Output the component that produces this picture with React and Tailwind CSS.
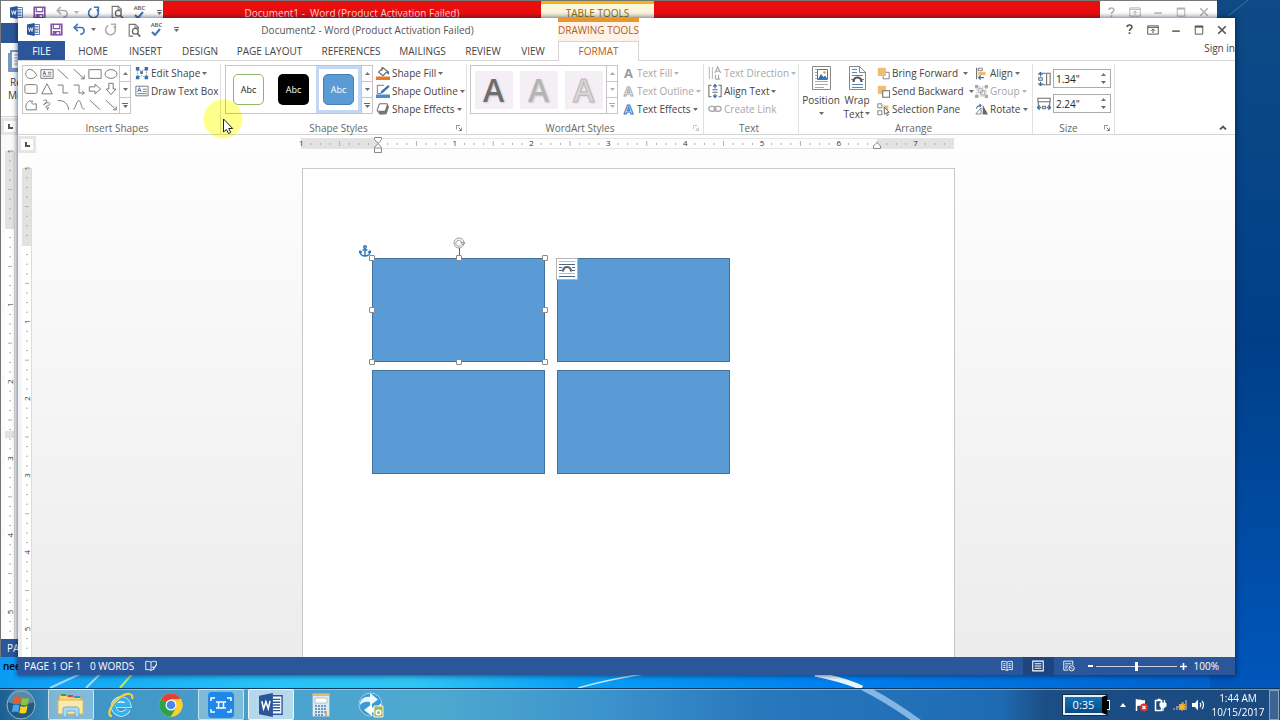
import React, { useState } from 'react';

const tabs = [
    { name: 'HOME', w: 'w-[52px]' },
    { name: 'INSERT', w: 'w-[53px]' },
    { name: 'DESIGN', w: 'w-[56px]' },
    { name: 'PAGE LAYOUT', w: 'w-[83px]' },
    { name: 'REFERENCES', w: 'w-[80px]' },
    { name: 'MAILINGS', w: 'w-[63px]' },
    { name: 'REVIEW', w: 'w-[58px]' },
    { name: 'VIEW', w: 'w-[42px]' },
];

/* ---------- small icons ---------- */

const Icon = ({ size = 14, children, className = '' }) => (
    <svg width={size} height={size} viewBox="0 0 16 16" fill="none" stroke="#6b6b6b" className={`shrink-0 ${className}`} aria-hidden="true">
        {children}
    </svg>
);

const Caret = ({ light }) => (
    <svg width="5" height="3" viewBox="0 0 5 3" className="shrink-0" aria-hidden="true">
        <path d="M0 0h5L2.500 3z" fill={light ? '#b5b5b5' : '#6a6a6a'} />
    </svg>
);

const WordLogo = ({ size = 13 }) => (
    <svg width={size} height={size} viewBox="0 0 26 26" className="shrink-0" aria-hidden="true">
        <path d="M14 3h11v20H14z" fill="#fff" stroke="#2b579a" strokeWidth="1.500" />
        <path d="M15 7h8M15 10h8M15 13h8M15 16h8M15 19h8" stroke="#2b579a" strokeWidth="1.400" />
        <path d="M0 3L15 0v26L0 23z" fill="#2b579a" />
        <path d="M3 9l2 8 2.500-7.500L10 17l2-8.500" fill="none" stroke="#fff" strokeWidth="1.700" />
    </svg>
);

const SaveIcon = () => (
    <Icon size={13}>
        <path d="M1.500 1.500h13v13h-13z" stroke="#8452a0" strokeWidth="2" />
        <path d="M4 2v5h8V2" stroke="#8452a0" strokeWidth="1.500" />
        <path d="M4 15v-4.500h8V15" stroke="#8452a0" strokeWidth="1.500" />
        <path d="M5 11h3v4H5z" fill="#8452a0" stroke="none" />
    </Icon>
);

const UndoIcon = ({ color }) => (
    <Icon size={13}>
        <path d="M2 5.500h8c5 0 5 8-1 8.500" stroke={color} strokeWidth="2" />
        <path d="M6 1L1.500 5.500 6 10" stroke={color} strokeWidth="2" />
    </Icon>
);

const RedoIcon = ({ color }) => (
    <Icon size={13}>
        <path d="M5.500 3A6 6 0 1 0 12 4" stroke={color} strokeWidth="2" />
        <path d="M8.500 1.500H14V7" stroke={color} strokeWidth="2" />
    </Icon>
);

const PreviewIcon = () => (
    <Icon size={14}>
        <path d="M7 15H2.500V1.500h7L13 5v2" stroke="#777" strokeWidth="1.300" />
        <path d="M9 1.500V5h4" stroke="#777" />
        <circle cx="9.500" cy="9.500" r="3.300" fill="#fff" stroke="#666" strokeWidth="1.500" />
        <path d="M12 12l3 3.500" stroke="#666" strokeWidth="2" />
    </Icon>
);

const SpellIcon = () => (
    <span className="flex flex-col items-center">
        <span className="text-[6px] leading-[5px] font-semibold text-[#555]">ABC</span>
        <svg width="10" height="8" viewBox="0 0 10 8" aria-hidden="true">
            <path d="M1 4l3 3 5-6" fill="none" stroke="#3a76b8" strokeWidth="2" />
        </svg>
    </span>
);

const QuickAccess = ({ active }) => (
    <div className="flex items-center pl-1 h-full shrink-0 w-[182px]">
        {[
            ['Word', <WordLogo />],
            ['Save', <SaveIcon />],
            ['Undo', <UndoIcon color={active ? '#3a76b8' : '#b0b0b0'} />],
        ].map(([name, icon]) => (
            <button key={name} aria-label={name} className="w-[23px] flex justify-center">{icon}</button>
        ))}
        <button aria-label="Undo list" className="w-2"><Caret light={!active} /></button>
        {[
            ['Redo', <RedoIcon color={active ? '#b0b0b0' : '#3a76b8'} />],
            ['Print preview', <PreviewIcon />],
            ['Spelling', <SpellIcon />],
        ].map(([name, icon]) => (
            <button key={name} aria-label={name} className="w-[23px] flex justify-center">{icon}</button>
        ))}
        <button aria-label="Customize toolbar" className="w-4 flex flex-col items-center gap-px">
            <span className="w-[5px] h-px bg-[#666]" />
            <Caret />
        </button>
    </div>
);

const WindowButtons = ({ color }) => (
    <div className="flex items-center h-full shrink-0 bg-white pr-[2px]">
        <button aria-label="Help" className="w-[23px] flex justify-center">
            <Icon size={11}>
                <path d="M4.500 4.500c0-4 7-4 7 0 0 2.500-3.500 2.500-3.500 5.500" stroke={color} strokeWidth="2.400" />
                <path d="M8 12v2.500" stroke={color} strokeWidth="2.600" />
            </Icon>
        </button>
        <button aria-label="Ribbon display options" className="w-[23px] flex justify-center">
            <Icon size={12}>
                <path d="M1 2.500h14v11H1zM1 4.500h14M8 12V7M5.500 9L8 6.500 10.500 9" stroke={color} strokeWidth="1.300" />
            </Icon>
        </button>
        <button aria-label="Minimize" className="w-[23px] flex justify-center">
            <Icon size={12}><path d="M3 9.500h10" stroke={color} strokeWidth="2" /></Icon>
        </button>
        <button aria-label="Maximize" className="w-[23px] flex justify-center">
            <Icon size={12}>
                <path d="M3 3h10v10.500H3z" stroke={color} strokeWidth="1.300" />
                <path d="M2.500 3.500h11" stroke={color} strokeWidth="2.600" />
            </Icon>
        </button>
        <button aria-label="Close" className="w-[23px] flex justify-center">
            <Icon size={12}><path d="M3 3l10 10M13 3L3 13" stroke={color} strokeWidth="2.200" /></Icon>
        </button>
    </div>
);

/* ---------- rulers ---------- */

const INCH = 76.8;

const HorizontalRuler = () => {
    const marks = [];
    for (let i = -7; i <= 59; i++) {
        if (i % 8 !== 0) marks.push(i);
    }
    return (
        <svg width="660" height="17" viewBox="-3 0 660 17" className="shrink-0" aria-hidden="true">
            <path d="M0 3h653v9H0z" fill="#fff" />
            <path d="M0 3h77v9H0zM576 3h77v9h-77z" fill="#e2e2e2" />
            <path d="M0 2.500h653M0 12.500h653" stroke="#e4e4e4" />
            {marks.map((i) => {
                const x = 77 + (i * INCH) / 8;
                return i % 4 === 0
                    ? <path key={i} d={`M${x} 5v5`} stroke="#b0b0b0" />
                    : <path key={i} d={`M${x} 7v2`} stroke="#b0b0b0" />;
            })}
            {[-1, 1, 2, 3, 4, 5, 6, 7].map((n) => (
                <text key={n} x={77 + n * INCH} y="10" textAnchor="middle" fontSize="8" fill="#333">{Math.abs(n)}</text>
            ))}
            <path d="M73.500 1.500h7v2L77 7.500l-3.500-4zM77 7.500l3.500 4v5h-7v-5zM73.500 12h7" fill="#fff" stroke="#8a8a8a" />
            <path d="M576 6.500l3.500 3.500v2.500h-7V10z" fill="#fff" stroke="#8a8a8a" />
        </svg>
    );
};

const VerticalRuler = ({ band }) => {
    const marks = [];
    for (let i = -7; i <= 43; i++) {
        if (i % 8 !== 0) marks.push(i);
    }
    return (
        <svg width="10" height="494" viewBox="0 -5 10 494" className="shrink-0" aria-hidden="true">
            <path d="M0 0h10v489H0z" fill="#fff" />
            <path d="M0 0h10v78H0z" fill="#e2e2e2" />
            {band && <path d="M0 280h10v7H0z" fill="#e2e2e2" />}
            <path d="M9.500 0v489" stroke="#dcdcdc" />
            {marks.map((i) => {
                const y = 77 + (i * INCH) / 8;
                return i % 4 === 0
                    ? <path key={i} d={`M3 ${y}h4`} stroke="#b0b0b0" />
                    : <path key={i} d={`M4 ${y}h2`} stroke="#b0b0b0" />;
            })}
            {[-1, 1, 2, 3, 4, 5].map((n) => (
                <text key={n} transform={`translate(8 ${77 + n * INCH}) rotate(-90)`} textAnchor="middle" fontSize="8" fill="#333">{Math.abs(n)}</text>
            ))}
        </svg>
    );
};

const TabSelector = () => (
    <button aria-label="Tab selector" className="w-[18px] h-[17px] shrink-0 bg-[#e6e6e6] p-[3px]">
        <span className="flex items-center justify-center bg-white h-[11px]">
            <svg width="5" height="5" viewBox="0 0 5 5"><path d="M1 0v4h4" fill="none" stroke="#555" strokeWidth="2" /></svg>
        </span>
    </button>
);

/* ---------- ribbon ---------- */

const Group = ({ name, width, children, launcher, faded }) => (
    <section className={`flex flex-col shrink-0 border-r border-[#e1e1e1] mt-[3px] ${width}`}>
        <div className="flex h-[58px] px-1">{children}</div>
        <div className="flex items-center h-3 pr-1">
            <h2 className="flex-1 text-center leading-3 text-[#666]">{name}</h2>
            {launcher && (
                <button aria-label={`${name} options`}>
                    <svg width="6" height="6" viewBox="0 0 7 7" fill="none" stroke={faded ? '#bbb' : '#777'}>
                        <path d="M.5 5V.5H5M3 3l3 3M6.500 3v3.500H3" />
                    </svg>
                </button>
            )}
        </div>
    </section>
);

const Tool = ({ icon, label, caret, disabled, wide }) => (
    <button disabled={disabled} className={`flex items-center h-[18px] gap-[2px] whitespace-nowrap ${disabled ? 'text-[#a6a6a6]' : 'text-[#444]'}`}>
        {icon}
        <span>{label}</span>
        {caret && <span className={wide ? 'ml-[3px]' : ''}><Caret light={disabled} /></span>}
    </button>
);

const GalleryScroll = ({ faded }) => (
    <div className="flex flex-col w-[11px] shrink-0 border-l border-[#c6c6c6] divide-y divide-[#c6c6c6]">
        <button aria-label="Row up" className="flex-1 flex items-center justify-center">
            <svg width="5" height="3" viewBox="0 0 5 3"><path d="M0 3h5L2.500 0z" fill={faded ? '#aaa' : '#777'} /></svg>
        </button>
        <button aria-label="Row down" className="flex-1 flex items-center justify-center"><Caret light={faded} /></button>
        <button aria-label="More" className="flex-1 flex flex-col gap-px items-center justify-center">
            <span className={faded ? 'w-[6px] h-px bg-[#aaa]' : 'w-[6px] h-px bg-[#666]'} />
            <Caret light={faded} />
        </button>
    </div>
);

const shapes = [
    ['Teardrop', <path d="M6 2.500C2 4 1 8 3 11s8 3.500 11.500-1.500C13 6 10 3 6 2.500z" />],
    ['Text box', <><path d="M1 3h14v10H1zM9 6h4M9 8h4M3 10.500h10" /><path d="M3.500 9L5 4.500 6.500 9M4 7.500h2" stroke="#3a6fb0" /></>],
    ['Line', <path d="M2 2.500l12 11" />],
    ['Arrow', <path d="M2 2.500l12 11M14 9.500v4h-4" />],
    ['Rectangle', <path d="M1 3h14v10H1z" />],
    ['Oval', <ellipse cx="8" cy="8" rx="6.800" ry="5" />],
    ['Rounded rectangle', <rect x="1" y="3" width="14" height="10" rx="2" />],
    ['Triangle', <path d="M8 2l6 11.500H2z" />],
    ['Elbow connector', <path d="M2 3.500h6v9h6" />],
    ['Elbow arrow', <path d="M2 3.500h6v9h6M11.500 10l2.500 2.500-2.500 2.500" />],
    ['Right arrow', <path d="M1.500 5.500H8V2.500L14.500 8 8 13.500v-3H1.500z" />],
    ['Down arrow', <path d="M5.500 1.500V8H2.500L8 14.500 13.500 8h-3V1.500z" />],
    ['Freeform', <path d="M3 13.500c-2-4-.5-8 3-10h4C7 6 10 8 14 6.500v7z" />],
    ['Scribble', <path d="M4 3c5-2 5 1 1 4s4-4 6-1-7 3-4 5 4-3 1 3" />],
    ['Arc', <path d="M2 3c7-1 12 4 12.500 10.500" />],
    ['Curve', <path d="M1.500 12.500C4 14 5 2 8 3s2 10.500 6.500 9.500" />],
    ['Line 2', <path d="M2 2.500l12 11" />],
    ['Arrow 2', <path d="M2 2.500l12 11M14 9.500v4h-4" />],
];

const InsertShapes = () => (
    <Group name="Insert Shapes" width="w-[203px]">
        <div className="flex shrink-0 border border-[#c6c6c6] h-[49px] mt-px">
            <div className="grid grid-cols-[repeat(6,16px)]">
                {shapes.map(([name, drawing]) => (
                    <button key={name} aria-label={name} className="flex items-center justify-center">
                        <Icon size={14}>{drawing}</Icon>
                    </button>
                ))}
            </div>
            <GalleryScroll />
        </div>
        <div className="pl-1">
            <Tool
                label="Edit Shape"
                caret
                icon={
                    <Icon>
                        <path d="M3 3l4 3 6-3v10l-6-2-4 2z" stroke="#888" strokeDasharray="2 1" />
                        <path d="M1 1h4v4H1zM11 1h4v4h-4zM1 11h4v4H1zM11 11h4v4h-4zM6 6h3v3H6z" fill="#3a6fb0" stroke="none" />
                    </Icon>
                }
            />
            <Tool
                label="Draw Text Box"
                icon={
                    <Icon>
                        <path d="M1 2.500h14v11H1zM9 6h4.500M9 8.500h4.500M3 11h10.500" />
                        <path d="M3 9l2-5 2 5M3.500 7.500h3" stroke="#3a6fb0" />
                    </Icon>
                }
            />
        </div>
    </Group>
);

const styleItems = [
    { box: 'bg-white border border-[#8db56b] text-[#222]', frame: 'border-transparent' },
    { box: 'bg-black text-white', frame: 'border-transparent' },
    { box: 'bg-[#5b9bd5] border border-[#4a7fb3] text-white', frame: 'border-[#c5d8f3]' },
];

const ShapeStyles = () => (
    <Group name="Shape Styles" width="w-[246px]" launcher>
        <div className="flex shrink-0 border border-[#c6c6c6] h-[49px] mt-px">
            {styleItems.map((s, i) => (
                <button key={i} className={`w-[45px] border-[3px] flex items-center justify-center ${s.frame}`}>
                    <span className={`w-[31px] h-[31px] rounded-[5px] flex items-center justify-center text-[9px] ${s.box}`}>Abc</span>
                </button>
            ))}
            <GalleryScroll />
        </div>
        <div className="pl-[3px]">
            <Tool
                label="Shape Fill"
                caret
                icon={
                    <Icon>
                        <path d="M3 7l5-5 5 4-5 5zM7 1v4" strokeWidth="1.300" />
                        <path d="M13 5c3 1 2 4 1 5l-2-3z" fill="#3a6fb0" stroke="none" />
                        <path d="M0 12h16v4H0z" fill="#e8792b" stroke="none" />
                    </Icon>
                }
            />
            <Tool
                label="Shape Outline"
                caret
                icon={
                    <Icon>
                        <path d="M9 1.500H1.500V11H6" />
                        <path d="M5 11l1-3 8-7 1.500 2L8 10z" fill="#3a6fb0" stroke="none" />
                        <path d="M0 12h16v4H0z" fill="#4a8bcb" stroke="none" />
                    </Icon>
                }
            />
            <Tool
                label="Shape Effects"
                caret
                icon={
                    <Icon>
                        <path d="M2 12.500l3 2 7-.5 3-9-3-2.500z" fill="#777" stroke="none" />
                        <path d="M5 2h7c1 0 1.500.5 1 1.500l-2 6c-.3.700-1 1-1.500 1h-7c-1 0-1.500-.5-1-1.500l2-6C3.800 2.300 4.300 2 5 2z" fill="#fff" strokeWidth="1.200" />
                    </Icon>
                }
            />
        </div>
    </Group>
);

const LetterIcon = ({ className }) => (
    <span className={`w-[13px] shrink-0 text-center text-[13px] leading-[18px] font-bold ${className}`} aria-hidden="true">A</span>
);

const WordArtStyles = () => (
    <Group name="WordArt Styles" width="w-[237px]" launcher faded>
        <div className="flex shrink-0 border border-[#c6c6c6] h-[49px] mt-px -ml-px">
            {['text-[#6e6e6e]', 'text-[#b4b4b4]', 'text-[#d8d8d8] [-webkit-text-stroke:1px_#b8b8b8]'].map((c) => (
                <button key={c} className="w-[45px] flex items-center justify-center">
                    <span className={`w-[38px] h-[38px] bg-[#f4eff4] text-center text-[32px] leading-[38px] font-semibold [text-shadow:1px_1px_2px_#ccc] ${c}`}>A</span>
                </button>
            ))}
            <GalleryScroll faded />
        </div>
        <div className="pl-1">
            <Tool label="Text Fill" caret disabled icon={<LetterIcon className="text-[#9a9a9a]" />} />
            <Tool label="Text Outline" caret disabled icon={<LetterIcon className="text-white [-webkit-text-stroke:1px_#aaa]" />} />
            <Tool label="Text Effects" caret icon={<LetterIcon className="text-white [-webkit-text-stroke:1px_#3a76c0]" />} />
        </div>
    </Group>
);

const TextGroup = () => (
    <Group name="Text" width="w-[95px]">
        <div>
            <Tool
                label="Text Direction"
                caret
                disabled
                icon={
                    <Icon>
                        <path d="M1.500 1v14M5 1v14" stroke="#aaa" />
                        <path d="M8 8l3-7 3.500 7M9 6h4.500M8.500 10v5M12 10v5M8.500 15h5.500" stroke="#aaa" strokeWidth="1.300" />
                    </Icon>
                }
            />
            <Tool
                label="Align Text"
                caret
                icon={
                    <Icon>
                        <path d="M4 1.500H1v13h3M12 1.500h3v13h-3M5 6.500h6M5 9.500h6" strokeWidth="1.200" />
                        <path d="M8 0v5M6 3l2-2.500L10 3M8 16v-5M6 13l2 2.500L10 13" stroke="#3a6fb0" strokeWidth="1.400" />
                    </Icon>
                }
            />
            <Tool
                label="Create Link"
                disabled
                icon={
                    <Icon>
                        <rect x="1" y="5" width="8" height="5.500" rx="2.700" stroke="#aaa" strokeWidth="1.600" />
                        <rect x="7" y="5" width="8" height="5.500" rx="2.700" stroke="#aaa" strokeWidth="1.600" />
                    </Icon>
                }
            />
        </div>
    </Group>
);

const Arrange = () => (
    <Group name="Arrange" width="w-[234px]">
        <button className="w-9 shrink-0 flex flex-col items-center text-[#444] pt-[2px]">
            <svg width="19" height="24" viewBox="0 0 19 24" fill="none" stroke="#888">
                <path d="M.5.5h18v23H.5z" fill="#fff" />
                <path d="M3 3.500h2M3 6.500h2M3 9.500h2M3 12.500h2M3 15.500h13M3 18.500h13M3 21.500h9" stroke="#aaa" />
                <path d="M5.500 3.500h10v10h-10z" fill="#fff" stroke="#4a78b0" />
                <path d="M6 13l3-5 2.500 3 1.500-1.500 2.500 3.500z" fill="#3a6fb0" stroke="none" />
                <circle cx="12.500" cy="6.500" r="1.300" fill="#e0a030" stroke="none" />
            </svg>
            <span className="leading-[13px] mt-1">Position</span>
            <span className="h-[13px] flex items-center"><Caret /></span>
        </button>
        <button className="w-9 shrink-0 flex flex-col items-center text-[#444] pt-[2px]">
            <svg width="19" height="24" viewBox="0 0 19 24" fill="none" stroke="#888">
                <path d="M1.500.5h10l6 6v17h-16z" fill="#fff" />
                <path d="M11.500.5v6h6" />
                <path d="M4 3.500h5M4 6.500h5M4 9.500h11M3 13.500h2M14 13.500h2M4 18.500h11M4 21.500h11" stroke="#5a88bd" />
                <path d="M5.500 16c0-6 8-6 8 0" stroke="#555" strokeWidth="2.200" />
            </svg>
            <span className="leading-[13px] mt-1">Wrap</span>
            <span className="h-[13px] flex items-center gap-[2px]">Text <Caret /></span>
        </button>
        <div className="pl-[2px] w-[100px] shrink-0">
            <Tool
                label="Bring Forward"
                caret
                wide
                icon={
                    <Icon size={13}>
                        <path d="M9 6.500h6v8H7.500V11" />
                        <path d="M1 1h10v10H1z" fill="#eebd74" stroke="none" />
                    </Icon>
                }
            />
            <Tool
                label="Send Backward"
                caret
                wide
                icon={
                    <Icon size={13}>
                        <path d="M1 1h10v10H1z" fill="#eebd74" stroke="none" />
                        <path d="M7 7h8.500v8H7z" fill="#fff" strokeWidth="1.300" />
                    </Icon>
                }
            />
            <Tool
                label="Selection Pane"
                icon={
                    <Icon size={13}>
                        <path d="M1 1h5v5H1zM1 9.500h5v5H1z" />
                        <path d="M8 3h6v6H8z" fill="#eebd74" stroke="none" />
                        <path d="M9 5v9l2-2 1.500 3.500 1.500-1-1.500-3H15z" fill="#fff" stroke="#555" />
                    </Icon>
                }
            />
        </div>
        <div>
            <Tool
                label="Align"
                caret
                icon={
                    <Icon size={13}>
                        <path d="M2 1v14" strokeWidth="1.300" />
                        <path d="M4 1.500h5v3H4z" />
                        <path d="M4 6h9v4H4z" fill="#eebd74" stroke="none" />
                        <path d="M4 13h7M7 10.500L4.500 13 7 15.500" stroke="#3a6fb0" strokeWidth="1.500" />
                    </Icon>
                }
            />
            <Tool
                label="Group"
                caret
                disabled
                icon={
                    <Icon size={13}>
                        <path d="M2.500 2.500h11v11h-11z" stroke="#aaa" strokeDasharray="2 1" />
                        <path d="M4.500 4.500h5v5h-5zM7 7h5v5H7z" stroke="#999" />
                        <path d="M0 0h4v4H0zM12 0h4v4h-4zM0 12h4v4H0zM12 12h4v4h-4z" fill="#aaa" stroke="none" />
                    </Icon>
                }
            />
            <Tool
                label="Rotate"
                caret
                icon={
                    <Icon size={13}>
                        <path d="M1 13.500h6.500V6z" />
                        <path d="M9.500 2v12H16z" fill="#666" stroke="none" />
                        <path d="M2 7c0-3 2-4 5-4M5.500 1l2 2-2 2" stroke="#3a6fb0" strokeWidth="1.300" />
                    </Icon>
                }
            />
        </div>
    </Group>
);

const SizeField = ({ id, label, value, onChange, icon }) => (
    <div className="flex items-center gap-[2px]">
        <label htmlFor={id} aria-label={label}>{icon}</label>
        <div className="flex items-center border border-[#ababab] bg-white h-[19px] w-[58px] pl-[2px] pr-1">
            <input id={id} value={value} onChange={(e) => onChange(e.target.value)} className="flex-1 min-w-0 text-[#222] outline-none" />
            <div className="flex flex-col gap-[5px]">
                <button aria-label={`${label} up`} className="block">
                    <svg width="5" height="3" viewBox="0 0 5 3"><path d="M0 3h5L2.500 0z" fill="#777" /></svg>
                </button>
                <button aria-label={`${label} down`} className="block"><Caret /></button>
            </div>
        </div>
    </div>
);

const SizeGroup = () => {
    const [height, setHeight] = useState('1.34"');
    const [width, setWidth] = useState('2.24"');
    return (
        <Group name="Size" width="w-[82px]" launcher>
            <div className="flex flex-col gap-[6px] pt-[5px]">
                <SizeField
                    id="shape-height"
                    label="Shape height"
                    value={height}
                    onChange={setHeight}
                    icon={
                        <Icon>
                            <path d="M11 1.500h4v13h-4zM2 6.500h4v3H2zM6 1.500h4M6 14.500h4" strokeWidth="1.200" />
                            <path d="M4 0v5M1.500 3L4 .5 6.500 3M4 16v-5M1.500 13L4 15.500 6.500 13" stroke="#3a6fb0" strokeWidth="1.500" />
                        </Icon>
                    }
                />
                <SizeField
                    id="shape-width"
                    label="Shape width"
                    value={width}
                    onChange={setWidth}
                    icon={
                        <Icon>
                            <path d="M1 1.500h14v4H1zM6.500 10.500h3v3h-3zM1.500 6v4M14.500 6v4" strokeWidth="1.200" />
                            <path d="M0 12h5M3 9.500L.5 12 3 14.500M16 12h-5M13 9.500l2.500 2.500-2.500 2.500" stroke="#3a6fb0" strokeWidth="1.500" />
                        </Icon>
                    }
                />
            </div>
        </Group>
    );
};

/* ---------- document ---------- */

const handles = [
    '-left-1 -top-1',
    'left-1/2 -ml-[3px] -top-1',
    '-right-1 -top-1',
    '-left-1 top-1/2 -mt-[3px]',
    '-right-1 top-1/2 -mt-[3px]',
    '-left-1 -bottom-1',
    'left-1/2 -ml-[3px] -bottom-1',
    '-right-1 -bottom-1',
];

const box = 'relative w-[173px] h-[104px] bg-[#5b9bd5] border border-[#41719c]';

const Page = () => (
    <div className="w-[653px] border border-b-0 border-[#c8c8c8] bg-white pl-[69px] pt-[89px]">
        <div className="grid grid-cols-[173px_173px] gap-x-[12px] gap-y-2">
            <div className={box}>
                <svg width="14" height="20" viewBox="0 0 14 20" fill="none" stroke="#999" className="absolute left-1/2 -ml-[7px] -top-[22px]">
                    <circle cx="7" cy="6" r="5" />
                    <path d="M9.500 7.500A3 3 0 1 1 9.500 5M9 5.500h4L11 8z" />
                    <path d="M7.500 11v7" stroke="#666" />
                </svg>
                {handles.map((h) => (
                    <span key={h} className={`absolute w-[6px] h-[6px] bg-white border border-[#8a8a8a] rounded-[1px] ${h}`} />
                ))}
                <svg width="12" height="12" viewBox="0 0 12 12" fill="none" stroke="#2e75b6" strokeWidth="1.400" className="absolute -left-[14px] -top-[14px]">
                    <circle cx="6" cy="2" r="1.300" />
                    <path d="M6 3v8M3.500 5h5M1 6.500c0 6 10 6 10 0M0 8l1-2 2 1.500M12 8l-1-2-2 1.500" />
                </svg>
            </div>
            <div className={box}>
                <button aria-label="Layout options" className="absolute -left-[2px] -top-px w-[22px] h-[22px] bg-white border border-[#b5b5b5] flex items-center justify-center">
                    <svg width="16" height="16" viewBox="0 0 16 16" fill="none" stroke="#44688c">
                        <path d="M0 .5h16M0 12.500h16" stroke="#a9c3dd" />
                        <path d="M0 3.500h16M0 15.500h16" />
                        <path d="M0 6.500h3M13 6.500h3M0 9.500h3M13 9.500h3" />
                        <path d="M4 10.500c0-6 8-6 8 0" stroke="#666" strokeWidth="2.200" />
                    </svg>
                </button>
            </div>
            <div className={box} />
            <div className={box} />
        </div>
    </div>
);

const StatusBar = () => {
    const [zoom, setZoom] = useState(50);
    return (
        <footer className="flex items-center h-[18px] bg-[#2b579a] text-white pl-[6px] pr-4 shrink-0">
            <span className="w-[66px]">PAGE 1 OF 1</span>
            <span className="w-[55px]">0 WORDS</span>
            <button aria-label="Proofing">
                <Icon size={12}>
                    <path d="M8 3v11M8 3C6 1.500 3 1.500 1 2v11c2-.5 5-.5 7 1 1-1 2-1.300 4-1.500M8 3c2-1.500 4-1.500 7-1v3" stroke="#fff" strokeWidth="1.200" />
                    <path d="M10 9l2 2 4-6" stroke="#fff" strokeWidth="1.500" />
                </Icon>
            </button>
            <div className="flex items-center h-full ml-auto">
                <button aria-label="Read mode" className="w-[31px] flex justify-center">
                    <Icon size={12}>
                        <path d="M8 3v11M8 3C6 1.500 3 1.500 1 2v11c2-.5 5-.5 7 1 2-1.500 5-1.500 7-1V2c-2-.5-5-.5-7 1M3 5h3M3 7.500h3M3 10h3M10 5h3M10 7.500h3M10 10h3" stroke="#fff" strokeWidth="1.200" />
                    </Icon>
                </button>
                <button aria-label="Print layout" className="w-[31px] h-full flex items-center justify-center bg-[#1f4580]">
                    <Icon size={12}><path d="M1 1.500h14v13H1zM3.500 5h9M3.500 8h9M3.500 11h9" stroke="#fff" strokeWidth="1.400" /></Icon>
                </button>
                <button aria-label="Web layout" className="w-[31px] flex justify-center">
                    <Icon size={12}>
                        <path d="M7 13.500H1v-12h12v5M3 5h8M3 8h4M3 10.500h3" stroke="#fff" strokeWidth="1.200" />
                        <circle cx="11.500" cy="11" r="3.500" stroke="#fff" strokeWidth="1.200" />
                        <path d="M9 10l3 1 2 2" stroke="#fff" />
                    </Icon>
                </button>
                <button aria-label="Zoom out" className="w-[11px] flex justify-center"><span className="w-[5px] h-[2px] bg-white" /></button>
                <input
                    type="range"
                    aria-label="Zoom"
                    value={zoom}
                    onChange={(e) => setZoom(Number(e.target.value))}
                    className="appearance-none w-[81px] h-3 bg-transparent bg-[linear-gradient(#c8d4e6,#c8d4e6)] bg-[length:100%_1px] bg-center bg-no-repeat [&::-webkit-slider-thumb]:appearance-none [&::-webkit-slider-thumb]:w-[3px] [&::-webkit-slider-thumb]:h-[9px] [&::-webkit-slider-thumb]:bg-white"
                />
                <button aria-label="Zoom in" className="w-[13px] flex justify-center">
                    <svg width="7" height="7" viewBox="0 0 7 7"><path d="M0 3.500h7M3.500 0v7" stroke="#fff" strokeWidth="1.600" /></svg>
                </button>
                <span className="pl-1">100%</span>
            </div>
        </footer>
    );
};

const MainWindow = () => (
    <main className="absolute left-[18px] right-[45px] top-[18px] bottom-[13px] flex flex-col bg-white shadow-[0_0_5px_1px_rgba(0,20,60,0.6)]">
        <header className="flex h-[23px] shrink-0">
            <QuickAccess active />
            <h1 className="w-[335px] mr-[23px] text-center leading-[24px] text-[#555]">Document2 - Word (Product Activation Failed)</h1>
            <div className="w-[81px] border-t-4 border-[#e8962e] bg-[#fdf3e9] text-center leading-[17px] text-[#b85c14]">DRAWING TOOLS</div>
            <div className="ml-auto"><WindowButtons color="#555" /></div>
        </header>
        <nav className="flex h-5 shrink-0 border-b border-[#d5d5d5] text-[#444]">
            <button className="w-[47px] h-[19px] bg-[#2b579a] text-white mr-[2px]">FILE</button>
            {tabs.map((t) => (
                <button key={t.name} className={`whitespace-nowrap ${t.w}`}>{t.name}</button>
            ))}
            <button className="w-[81px] ml-1 h-5 bg-white border border-b-0 border-[#d5d5d5] text-[#b85c14] pb-[2px]">FORMAT</button>
            <a href="#signin" className="ml-auto leading-[14px]">Sign in</a>
        </nav>
        <div className="flex h-[74px] shrink-0 border-b border-[#d5d5d5]">
            <InsertShapes />
            <ShapeStyles />
            <WordArtStyles />
            <TextGroup />
            <Arrange />
            <SizeGroup />
            <button aria-label="Collapse ribbon" className="ml-auto mr-2 self-end mb-1">
                <svg width="8" height="5" viewBox="0 0 8 5"><path d="M1 4.500l3-3 3 3" fill="none" stroke="#555" strokeWidth="1.800" /></svg>
            </button>
        </div>
        <div className="flex-1 min-h-0 flex flex-col bg-linear-to-b from-[#fefefe] to-[#ececec]">
            <div className="flex h-7 shrink-0">
                <div className="w-[14px] shrink-0 pt-px"><TabSelector /></div>
                <div className="flex-1 flex justify-center pr-[11px] pt-px"><HorizontalRuler /></div>
            </div>
            <div className="flex-1 min-h-0 flex overflow-hidden">
                <div className="w-[14px] pl-1 shrink-0"><VerticalRuler /></div>
                <div className="flex-1 flex justify-center pr-[10px] pt-[5px]"><Page /></div>
            </div>
        </div>
        <StatusBar />
    </main>
);

const BackWindow = () => (
    <div className="absolute left-0 right-[63px] top-0 bottom-[31px] flex flex-col bg-white border-l border-t border-[#777] text-[#444]">
        <div className="flex h-[22px] shrink-0">
            <div className="w-[162px] overflow-hidden"><QuickAccess /></div>
            <div className="flex-1 flex bg-[#e90e0e]">
                <p className="w-[378px] text-center leading-[24px] text-[#ffd9d9] whitespace-pre">Document1 -  Word (Product Activation Failed)</p>
                <div className="w-[113px] border-t-[3px] border-[#f0b410] bg-[#fbf6dc] text-center leading-[19px] text-[#8a6d10]">TABLE TOOLS</div>
            </div>
            <WindowButtons color="#b5b5b5" />
        </div>
        <div className="w-[47px] h-5 bg-[#2b579a] shrink-0" />
        <div className="h-[74px] shrink-0 border-b border-[#d5d5d5] pl-[7px] pt-[7px]">
            <svg width="20" height="22" viewBox="0 0 20 22" fill="none" stroke="#4a78b0">
                <path d="M3 1h16v18H3z" fill="#fff" strokeWidth="1.500" />
                <path d="M1 3v18h16" strokeWidth="1.500" />
                <path d="M6 5h12M6 8h12M6 11h12M6 14h12" stroke="#aaa" />
            </svg>
            <p className="leading-[13px] pt-1 pl-[2px]">Read</p>
            <p className="leading-[13px]">Mode</p>
        </div>
        <div className="flex-1 min-h-0 overflow-hidden bg-[#fafafa]">
            <div className="h-[29px] pt-px"><TabSelector /></div>
            <div className="pl-1"><VerticalRuler band /></div>
        </div>
        <div className="h-[18px] bg-[#2b579a] text-white pl-[6px] leading-[18px] shrink-0">PAGE 1 OF 1</div>
    </div>
);

/* ---------- taskbar ---------- */

const taskbarApps = [
    {
        name: 'File Explorer',
        frame: 'border-white/60 bg-white/35',
        icon: (
            <svg width="28" height="26" viewBox="0 0 28 26">
                <path d="M2 3h7l2 2h13v17H2z" fill="#f2d680" stroke="#c9a548" />
                <path d="M4 2h5v2H4z" fill="#3d9b4a" />
                <path d="M11 3h5v2h-5z" fill="#d9432f" />
                <path d="M17 4h6v2h-6z" fill="#3a8fd0" />
                <path d="M1 8h25v14H1z" fill="#fbe9a8" stroke="#d8b860" />
                <path d="M6 25v-8c0-2 2-2 3-2h10c2 0 3 1 3 2v8h-4v-6h-8v6z" fill="#a9d8f2" stroke="#6ab0d8" />
            </svg>
        ),
    },
    {
        name: 'Internet Explorer',
        frame: 'border-transparent',
        icon: (
            <svg width="26" height="26" viewBox="0 0 26 26" fill="none">
                <path d="M20 17.500A7.500 7.500 0 1 1 20.500 13H8" stroke="#e8f8ff" strokeWidth="5.500" />
                <path d="M20 17.500A7.500 7.500 0 1 1 20.500 13H8" stroke="#35b2ee" strokeWidth="4" />
                <path d="M4 24C-2 24 3 12 11 6S26 1 24 7" stroke="#f5d23c" strokeWidth="2.200" />
            </svg>
        ),
    },
    {
        name: 'Chrome',
        frame: 'border-transparent',
        icon: (
            <svg width="24" height="24" viewBox="0 0 24 24">
                <circle cx="12" cy="12" r="11.500" fill="#fbcf2e" />
                <path d="M12 12L2.040 6.250A11.500 11.500 0 0 1 21.960 6.250H12z" fill="#e34133" />
                <path d="M12 12L2.040 6.250A11.500 11.500 0 0 0 12 23.500l5-8.500z" fill="#2ba24c" />
                <path d="M12 6.250h9.960A11.500 11.500 0 0 1 12 23.500l5-8.600z" fill="#fbcf2e" />
                <circle cx="12" cy="12" r="5.500" fill="#fff" />
                <circle cx="12" cy="12" r="4.300" fill="#4a85f0" />
            </svg>
        ),
    },
    {
        name: 'Screen recorder',
        frame: 'border-white/60 bg-white/30',
        icon: (
            <svg width="26" height="26" viewBox="0 0 26 26" fill="none" stroke="#fff" strokeWidth="1.500">
                <rect width="26" height="26" rx="4" fill="#1f87ea" stroke="none" />
                <path d="M3 9V6h4M19 6h4v3M3 17v3h4M19 20h4v-3M8 10h10M8 16h10M10.500 10v6M15.500 10v6" />
            </svg>
        ),
    },
    {
        name: 'Word',
        frame: 'border-white/80 bg-white/60',
        icon: <WordLogo size={24} />,
    },
    {
        name: 'Calculator',
        frame: 'border-transparent',
        icon: (
            <svg width="18" height="24" viewBox="0 0 18 24">
                <rect x=".5" y=".5" width="17" height="23" rx="1" fill="#dcebf7" stroke="#8fb4d2" />
                <path d="M1 1h16v2H1z" fill="#f0b860" />
                <path d="M3 5h12v5H3z" fill="#fff" stroke="#8aa" strokeWidth=".6" />
                <path d="M3 13h12M3 16h12M3 19h12M3 22h9" stroke="#6f97b8" strokeWidth="1.800" strokeDasharray="2 1" />
                <path d="M13 18h2v5h-2z" fill="#f0a040" />
            </svg>
        ),
    },
    {
        name: 'Sync',
        frame: 'border-transparent',
        icon: (
            <svg width="26" height="26" viewBox="0 0 26 26">
                <circle cx="12.500" cy="12.500" r="11.500" fill="#3b9bd8" stroke="#9fd0ee" />
                <path d="M2 13C2 7 7 4 12 5V1l8 6.500-8 6V10c-4-1-8 0-10 3z" fill="#eef8fd" />
                <path d="M23 11c1 6-4 10-9 9.500V24l-8-6 8-6v3.500c4 0 7-1.500 9-4.500z" fill="#fff" />
                <path d="M16 14h9v11h-9z" fill="#9fb85c" stroke="#eef3dc" />
                <circle cx="20.500" cy="20.500" r="2.300" fill="none" stroke="#fff" strokeWidth="1.500" />
            </svg>
        ),
    },
];

const Taskbar = () => (
    <div className="relative h-8 shrink-0 flex items-stretch border-t border-[#0d3a63] bg-[linear-gradient(90deg,#1c5f92_0px,#3e93c4_60px,#4aa3cc_300px,#4fa9cf_430px,#3d93cc_600px,#2878bd_760px,#1e6bb3_1000px,#1b4e85_1045px,#1a4a80_100%)] shadow-[inset_0_1px_0_rgba(255,255,255,0.4)] text-white">
        <svg width="360" height="31" viewBox="570 0 360 31" className="absolute left-[570px] top-0" fill="none" aria-hidden="true">
            <path d="M862 -2Q890 12 920 34" stroke="#9cc8ee" strokeWidth="6" opacity=".8" />
        </svg>
        <button aria-label="Start" className="w-[42px] mr-1 flex items-center justify-center">
            <svg width="30" height="30" viewBox="0 0 30 30">
                <circle cx="15" cy="15" r="14" fill="#235a80" stroke="#8fb9d0" />
                <path d="M2 12a13 13 0 0 1 26 0c-6 3-20 3-26 0z" fill="#7fa9c2" opacity=".6" />
                <path d="M8.500 7.500c2.500-1.500 4.500-1 6.500 0l-1.200 7c-2-1-4-1.500-6.500 0z" fill="#ee5a24" />
                <path d="M16 8c2.500 1 4.500 1 7-.5l-1.200 7c-2.500 1.500-4.500 1-7 .5z" fill="#8cc63f" />
                <path d="M7 15.500c2.500-1.500 4.500-1 6.500 0l-1.200 7c-2-1-4-1.500-6.500 0z" fill="#3fa9f5" />
                <path d="M14.500 16c2.500 1 4.500 1 7-.5l-1.200 7c-2.500 1.500-4.500 1-7 .5z" fill="#fcd116" />
            </svg>
        </button>
        {taskbarApps.map((app) => (
            <button key={app.name} aria-label={app.name} className={`w-[46px] mx-[2px] rounded-[2px] border flex items-center justify-center ${app.frame}`}>
                {app.icon}
            </button>
        ))}
        <div className="ml-auto flex items-center">
            <div className="flex items-center mr-1">
                <div className="w-[44px] h-[20px] border-2 border-[#e8eef4] bg-linear-to-b from-[#1274b8] to-[#064a86] border-r-[5px] border-r-black text-center text-[11px] leading-4 outline outline-1 outline-black/40">0:35</div>
                <span className="w-[3px] h-[10px] border border-l-0 border-[#e8eef4] bg-black" />
            </div>
            <button aria-label="Show hidden icons" className="w-[18px] flex justify-center">
                <svg width="6" height="4" viewBox="0 0 6 4"><path d="M0 4h6L3 0z" fill="#fff" /></svg>
            </button>
            <button aria-label="Action center" className="w-[19px] flex justify-center">
                <svg width="13" height="14" viewBox="0 0 13 14">
                    <path d="M1.500 1v12" stroke="#fff" strokeWidth="1.500" />
                    <path d="M2 2c3-1.500 4 1 8 0v6c-4 1-5-1-8 0z" fill="#fff" />
                    <circle cx="9" cy="9.500" r="4" fill="#d8342c" />
                    <path d="M7.500 8l3 3M10.500 8l-3 3" stroke="#fff" strokeWidth="1.200" />
                </svg>
            </button>
            <button aria-label="Power" className="w-[19px] flex justify-center">
                <svg width="13" height="14" viewBox="0 0 13 14" fill="none" stroke="#fff">
                    <path d="M3.500 1.500h3M1.500 2.500h6v10h-6z" strokeWidth="1.500" />
                    <path d="M6 5h6v3.500L9 10l-3-1.500z" fill="#fff" />
                    <path d="M7.500 2v3M10.500 2v3M9 10v3" strokeWidth="1.300" />
                </svg>
            </button>
            <button aria-label="Network" className="w-[19px] flex justify-center">
                <svg width="14" height="12" viewBox="0 0 14 12">
                    <path d="M0 11h2V9H0zM3 11h2V7H3zM6 11h2V5H6zM9 11h2V3H9zM12 11h2V1h-2z" fill="#7a8a98" />
                    <circle cx="9" cy="8" r="3" fill="#f5a623" />
                    <path d="M9 3.500v9M4.500 8h9M6 5l6 6M12 5l-6 6" stroke="#f8b63a" />
                </svg>
            </button>
            <button aria-label="Volume" className="w-[18px] flex justify-center">
                <svg width="13" height="12" viewBox="0 0 13 12" fill="none" stroke="#fff">
                    <path d="M0 4h3l3-3.500v11L3 8H0z" fill="#fff" stroke="none" />
                    <path d="M8 4c1 1 1 3 0 4M10 2c2 2 2 6 0 8" strokeWidth="1.200" />
                </svg>
            </button>
            <div className="w-[62px] text-center leading-[14px]">
                <p>1:44 AM</p>
                <p>10/15/2017</p>
            </div>
            <button aria-label="Show desktop" className="w-[10px] h-[30px] mr-px border border-white/40 bg-white/15" />
        </div>
    </div>
);

const Pointer = () => (
    <svg width="40" height="40" viewBox="0 0 40 40" className="absolute left-[203px] top-[99px] pointer-events-none mix-blend-multiply" aria-hidden="true">
        <circle cx="20" cy="20" r="19.500" fill="#ffff8c" />
        <path d="M20.500 20v13l3-2.500 2 4 2.200-1-2-4h4z" fill="#fff" stroke="#222" />
    </svg>
);

const App = () => (
    <div className="relative h-screen overflow-hidden flex flex-col text-[10px] leading-none font-['Open_Sans','Noto_Sans',sans-serif]">
        <div className="relative flex-1 min-h-0 bg-[linear-gradient(90deg,#0a9cf5_0%,#25c2f8_20%,#2fc6f5_32%,#08a0f5_45%,#0080ee_65%,#005bc4_100%)]">
            <div className="absolute right-0 inset-y-0 w-[70px] bg-linear-to-b from-[#0f4a86] via-[#003f88] to-[#0056bb]" />
            <svg width="40" height="18" viewBox="0 0 40 18" className="absolute right-[20px] top-0" fill="none" aria-hidden="true">
                <path d="M8 16L28 0" stroke="#5a8fc0" opacity=".6" />
            </svg>
            <svg width="1280" height="14" viewBox="0 0 1280 14" className="absolute left-0 bottom-0" fill="none" aria-hidden="true">
                <path d="M50 14L80 0M86 14l14-14" stroke="#d8f4ff" strokeWidth="2" opacity=".7" />
                <path d="M120 14l12-14" stroke="#c5e84a" strokeWidth="2" />
                <path d="M578 14Q610 5 644 0" stroke="#bfe8ff" strokeWidth="1.500" />
                <path d="M815 0Q845 6 862 14" stroke="#e8f6ff" strokeWidth="5" />
            </svg>
            <span className="absolute left-[3px] bottom-[17px] text-black font-semibold">need</span>
            <BackWindow />
            <MainWindow />
        </div>
        <Taskbar />
        <Pointer />
    </div>
);

export default App;
